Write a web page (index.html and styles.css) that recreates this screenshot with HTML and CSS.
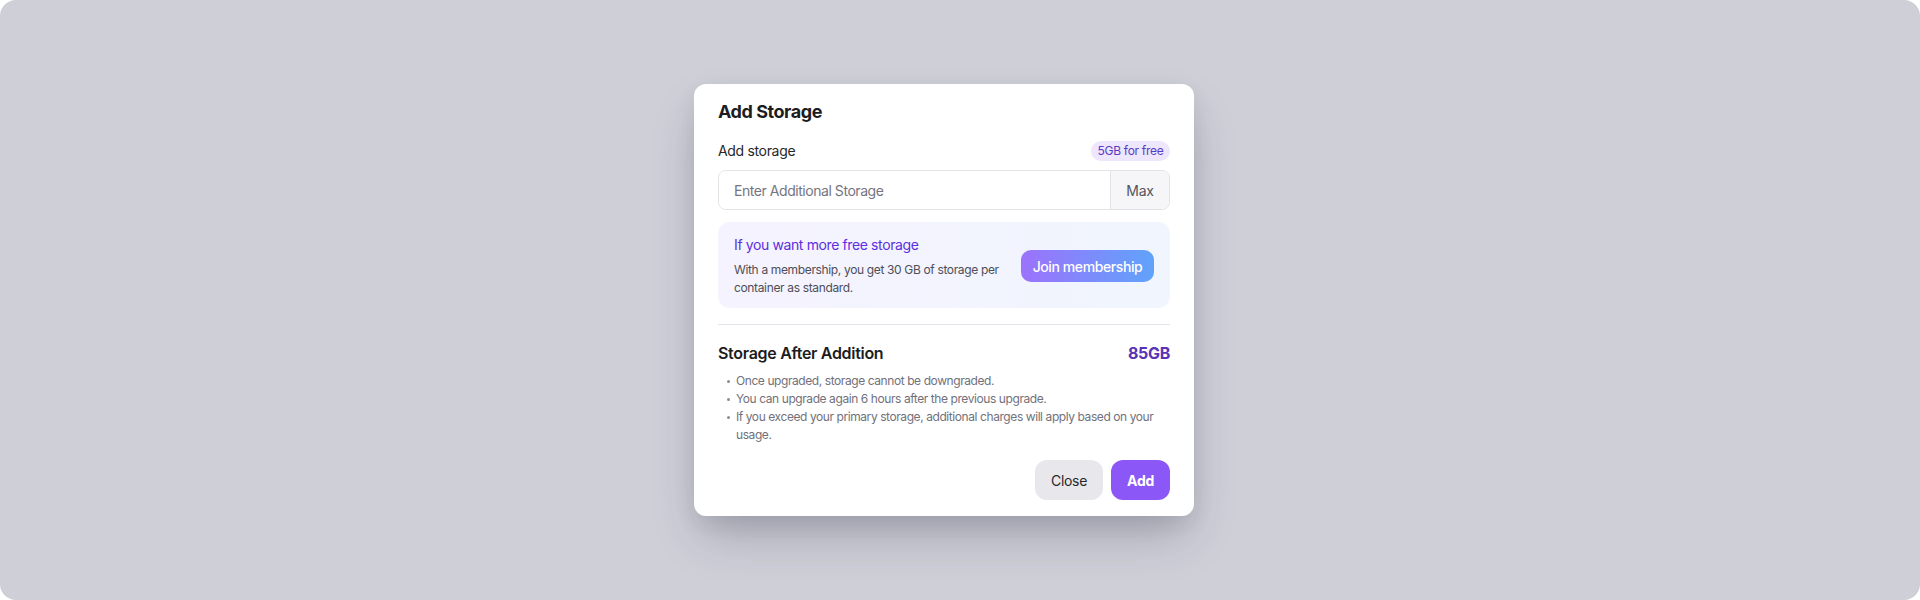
FILE: index.html
```html
<!DOCTYPE html>
<html lang="en">
<head>
<meta charset="utf-8">
<title>Add Storage</title>
<link rel="stylesheet" href="styles.css">
</head>
<body>
<div class="backdrop">
  <div class="modal">
    <h2 class="modal-title">Add Storage</h2>
    <div class="field-row">
      <span class="field-label">Add storage</span>
      <span class="badge">5GB for free</span>
    </div>
    <div class="input-group">
      <input class="input" type="text" placeholder="Enter Additional Storage">
      <span class="input-addon">Max</span>
    </div>
    <div class="promo">
      <div class="promo-text">
        <div class="promo-title">If you want more free storage</div>
        <p class="promo-desc">With a membership, you get 30 GB of storage per container as standard.</p>
      </div>
      <button class="btn-join">Join membership</button>
    </div>
    <hr class="divider">
    <div class="summary-row">
      <span class="summary-label">Storage After Addition</span>
      <span class="summary-value">85GB</span>
    </div>
    <ul class="notes">
      <li>Once upgraded, storage cannot be downgraded.</li>
      <li>You can upgrade again 6 hours after the previous upgrade.</li>
      <li>If you exceed your primary storage, additional charges will apply based on your usage.</li>
    </ul>
    <div class="actions">
      <button class="btn btn-close">Close</button>
      <button class="btn btn-add">Add</button>
    </div>
  </div>
</div>
</body>
</html>
```

FILE: styles.css
```css
* { box-sizing: border-box; }
html, body {
  margin: 0;
  padding: 0;
  background: #ffffff;
  font-family: "Inter", "Noto Sans", sans-serif;
}
.backdrop {
  width: 1920px;
  height: 600px;
  background: #cfcfd8;
  border-radius: 16px;
  display: flex;
  align-items: center;
  justify-content: center;
  padding-right: 32px;
}
.modal {
  width: 500px;
  background: #ffffff;
  border-radius: 12px;
  padding: 16px 24px;
  box-shadow: 0 24px 48px -8px rgba(40, 40, 60, 0.28), 0 8px 20px rgba(40, 40, 60, 0.08);
  display: flex;
  flex-direction: column;
}
.modal-title {
  margin: 0;
  font-size: 18px;
  line-height: 24px;
  font-weight: 700;
  letter-spacing: -0.45px;
  color: #1c1c21;
}
.field-row {
  margin-top: 17px;
  height: 20px;
  display: flex;
  align-items: center;
  justify-content: space-between;
}
.field-label {
  font-size: 14px;
  line-height: 20px;
  letter-spacing: -0.33px;
  color: #27272a;
}
.badge {
  height: 20px;
  width: 79px;
  text-align: center;
  border-radius: 10px;
  background: #ede6fd;
  color: #5a3bc2;
  font-size: 12px;
  line-height: 20px;
  letter-spacing: -0.3px;
}
.input-group {
  margin-top: 9px;
  height: 40px;
  display: flex;
  border: 1px solid #e2e2e7;
  border-radius: 8px;
  overflow: hidden;
}
.input {
  flex: 1;
  border: none;
  outline: none;
  padding: 0 15px;
  font-family: inherit;
  font-size: 14px;
  letter-spacing: -0.45px;
  color: #27272a;
  background: #ffffff;
}
.input::placeholder { color: #75757f; }
.input-addon {
  width: 59px;
  display: flex;
  align-items: center;
  justify-content: center;
  border-left: 1px solid #e2e2e7;
  background: #f6f6f8;
  color: #55555e;
  font-size: 14px;
  letter-spacing: -0.3px;
}
.promo {
  margin-top: 12px;
  height: 86px;
  padding: 13px 16px 11px;
  border-radius: 12px;
  background: linear-gradient(90deg, #f5f3ff 0%, #f0f5fe 100%);
  display: flex;
  align-items: center;
  justify-content: space-between;
  gap: 16px;
}
.promo-text { align-self: flex-start; flex: 1; }
.promo-title {
  font-size: 14px;
  line-height: 20px;
  letter-spacing: -0.38px;
  color: #5b2fe0;
}
.promo-desc {
  margin: 6px 0 0;
  font-size: 12px;
  line-height: 18px;
  letter-spacing: -0.35px;
  color: #4e4e57;
}
.btn-join {
  height: 32px;
  padding: 0;
  width: 133px;
  flex: none;
  border: none;
  border-radius: 10px;
  background: linear-gradient(90deg, #9c72fc 0%, #60a3fa 100%);
  color: #ffffff;
  font-family: inherit;
  font-size: 14px;
  font-weight: 500;
  letter-spacing: -0.4px;
  white-space: nowrap;
}
.divider {
  margin: 16px 0 0;
  border: none;
  border-top: 1px solid #e3e3e9;
  height: 0;
}
.summary-row {
  margin-top: 16px;
  display: flex;
  justify-content: space-between;
  align-items: center;
  height: 24px;
}
.summary-label {
  font-size: 16px;
  font-weight: 600;
  letter-spacing: -0.3px;
  color: #1c1c21;
}
.summary-value {
  font-size: 16px;
  font-weight: 700;
  letter-spacing: -0.3px;
  color: #5a33b6;
}
.notes {
  list-style: none;
  margin: 7px 0 0;
  padding: 0 0 0 18px;
}
.notes li {
  position: relative;
  font-size: 12px;
  line-height: 18px;
  letter-spacing: -0.42px;
  color: #71717b;
}
.notes li::before {
  content: "";
  position: absolute;
  left: -9px;
  top: 8px;
  width: 3px;
  height: 3px;
  border-radius: 50%;
  background: #8a8a93;
}
.actions {
  margin-top: 16px;
  display: flex;
  justify-content: flex-end;
  gap: 8px;
}
.btn {
  height: 40px;
  padding: 0;
  border: none;
  border-radius: 12px;
  font-family: inherit;
  font-size: 14px;
  letter-spacing: -0.3px;
}
.btn-close {
  width: 68px;
  background: #e7e7ec;
  color: #27272a;
}
.btn-add {
  width: 59px;
  background: #8b57f7;
  color: #ffffff;
  font-weight: 700;
}
```
